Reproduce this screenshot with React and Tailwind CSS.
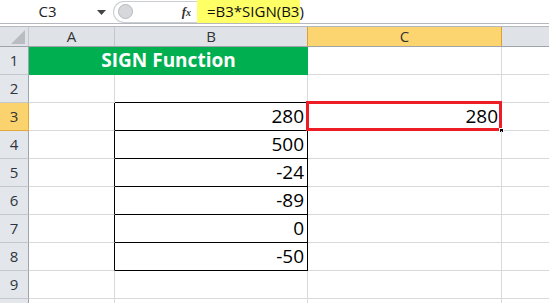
const font = { fontFamily: '"Open Sans", "Liberation Sans", sans-serif' };

const values = ['', '', '280', '500', '-24', '-89', '0', '-50', ''];

function RowHead({ n, active }) {
  if (active) {
    return (
      <div className="w-[29px] shrink-0 flex items-center justify-center text-[15px] bg-[#fbd36e] border-r border-b border-[#e3a83b] text-[#333]">
        {n}
      </div>
    );
  }
  return (
    <div className="w-[29px] shrink-0 flex items-center justify-center text-[15px] bg-[#e3e6eb] border-r border-r-[#9fa4aa] border-b border-b-[#c4c7cc] text-[#2d3440]">
      {n}
    </div>
  );
}

export default function App() {
  return (
    <div className="w-[549px] h-[303px] overflow-hidden bg-white text-black" style={font}>
      {/* formula bar */}
      <div className="h-[24px] flex items-center bg-white border-b border-[#b5b8bd]">
        <div className="w-[113px] h-full flex items-center relative">
          <span className="w-[95px] text-center text-[15px] text-[#222]">C3</span>
          <svg width="9" height="5" viewBox="0 0 9 5" className="absolute left-[97px] top-[10px]">
            <path d="M0 0h9L4.5 5z" fill="#444" />
          </svg>
        </div>
        <div className="w-[84px] h-[22px] flex items-center rounded-l-full border border-r-0 border-[#c9ccd1] bg-white">
          <div className="ml-[4px] w-[15px] h-[15px] rounded-full bg-[#d6d8db] border border-[#b7b9bc]" />
          <span className="ml-auto mr-[6px] text-[13px] italic font-bold text-[#333]" style={{ fontFamily: '"Liberation Serif", serif' }}>
            f<span className="text-[10px]">x</span>
          </span>
        </div>
        <div className="w-[103px] h-full bg-[#ffff66] flex items-center pl-[10px] text-[15px] text-[#111]">
          =B3*SIGN(B3)
        </div>
      </div>
      <div className="h-[2px] bg-white" />
      {/* column headers */}
      <div className="h-[21px] flex border-t border-[#b5b8bd] border-b border-b-[#9fa4aa] bg-[#dfe3e8] text-[15px] text-[#333]">
        <div className="w-[29px] shrink-0 relative border-r border-[#c4c7cc]">
          <svg width="14" height="14" viewBox="0 0 14 14" className="absolute right-[3px] bottom-[2px]">
            <path d="M14 0V14H0z" fill="#b9bdc3" />
          </svg>
        </div>
        <div className="w-[86px] shrink-0 flex items-center justify-center border-r border-[#c4c7cc]">A</div>
        <div className="w-[192px] shrink-0 flex items-center justify-center">B</div>
        <div className="w-[195px] shrink-0 flex items-center justify-center bg-[#fcd470] border-x border-[#dda032]">C</div>
        <div className="flex-1" />
      </div>
      {/* rows */}
      {values.map((v, i) => {
        const r = i + 1;
        const boxed = r >= 3 && r <= 8;
        if (r === 1) {
          return (
            <div key={r} className="h-[28px] flex">
              <RowHead n={r} />
              <div className="w-[279px] shrink-0 bg-[#00b050] text-white font-bold text-[19px] flex items-center justify-center border-b border-[#00b050]">
                SIGN Function
              </div>
              <div className="w-[194px] shrink-0 border-r border-b border-[#d9d9d9]" />
              <div className="flex-1 border-b border-[#d9d9d9]" />
            </div>
          );
        }
        return (
          <div key={r} className="h-[28px] flex">
            <RowHead n={r} active={r === 3} />
            <div
              className={`w-[86px] shrink-0 border-b border-b-[#d9d9d9] border-r ${
                boxed ? 'border-r-black' : 'border-r-[#d9d9d9]'
              }`}
            />
            <div
              className={`w-[193px] shrink-0 border-r border-b flex items-center justify-end pr-[3px] text-[19px] ${
                boxed || r === 2 ? 'border-b-black' : 'border-b-[#d9d9d9]'
              } ${boxed ? 'border-r-black' : 'border-r-[#d9d9d9]'}`}
            >
              {v}
            </div>
            <div className="w-[194px] shrink-0 border-r border-b border-[#d9d9d9] relative flex items-center justify-end pr-[3px] text-[19px]">
              {r === 3 && (
                <>
                  <span>280</span>
                  <div className="absolute -left-[2px] -top-[2px] -right-[1px] -bottom-[1px] border-[3px] border-[#ee1c25]" />
                  <div className="absolute -right-[3px] -bottom-[3px] w-[5px] h-[5px] bg-black border border-white" />
                </>
              )}
            </div>
            <div className="flex-1 border-b border-[#d9d9d9]" />
          </div>
        );
      })}
      <div className="h-[28px] flex">
        <RowHead n="" />
        <div className="w-[86px] shrink-0 border-r border-[#d9d9d9]" />
        <div className="w-[193px] shrink-0 border-r border-[#d9d9d9]" />
        <div className="w-[194px] shrink-0 border-r border-[#d9d9d9]" />
      </div>
    </div>
  );
}
